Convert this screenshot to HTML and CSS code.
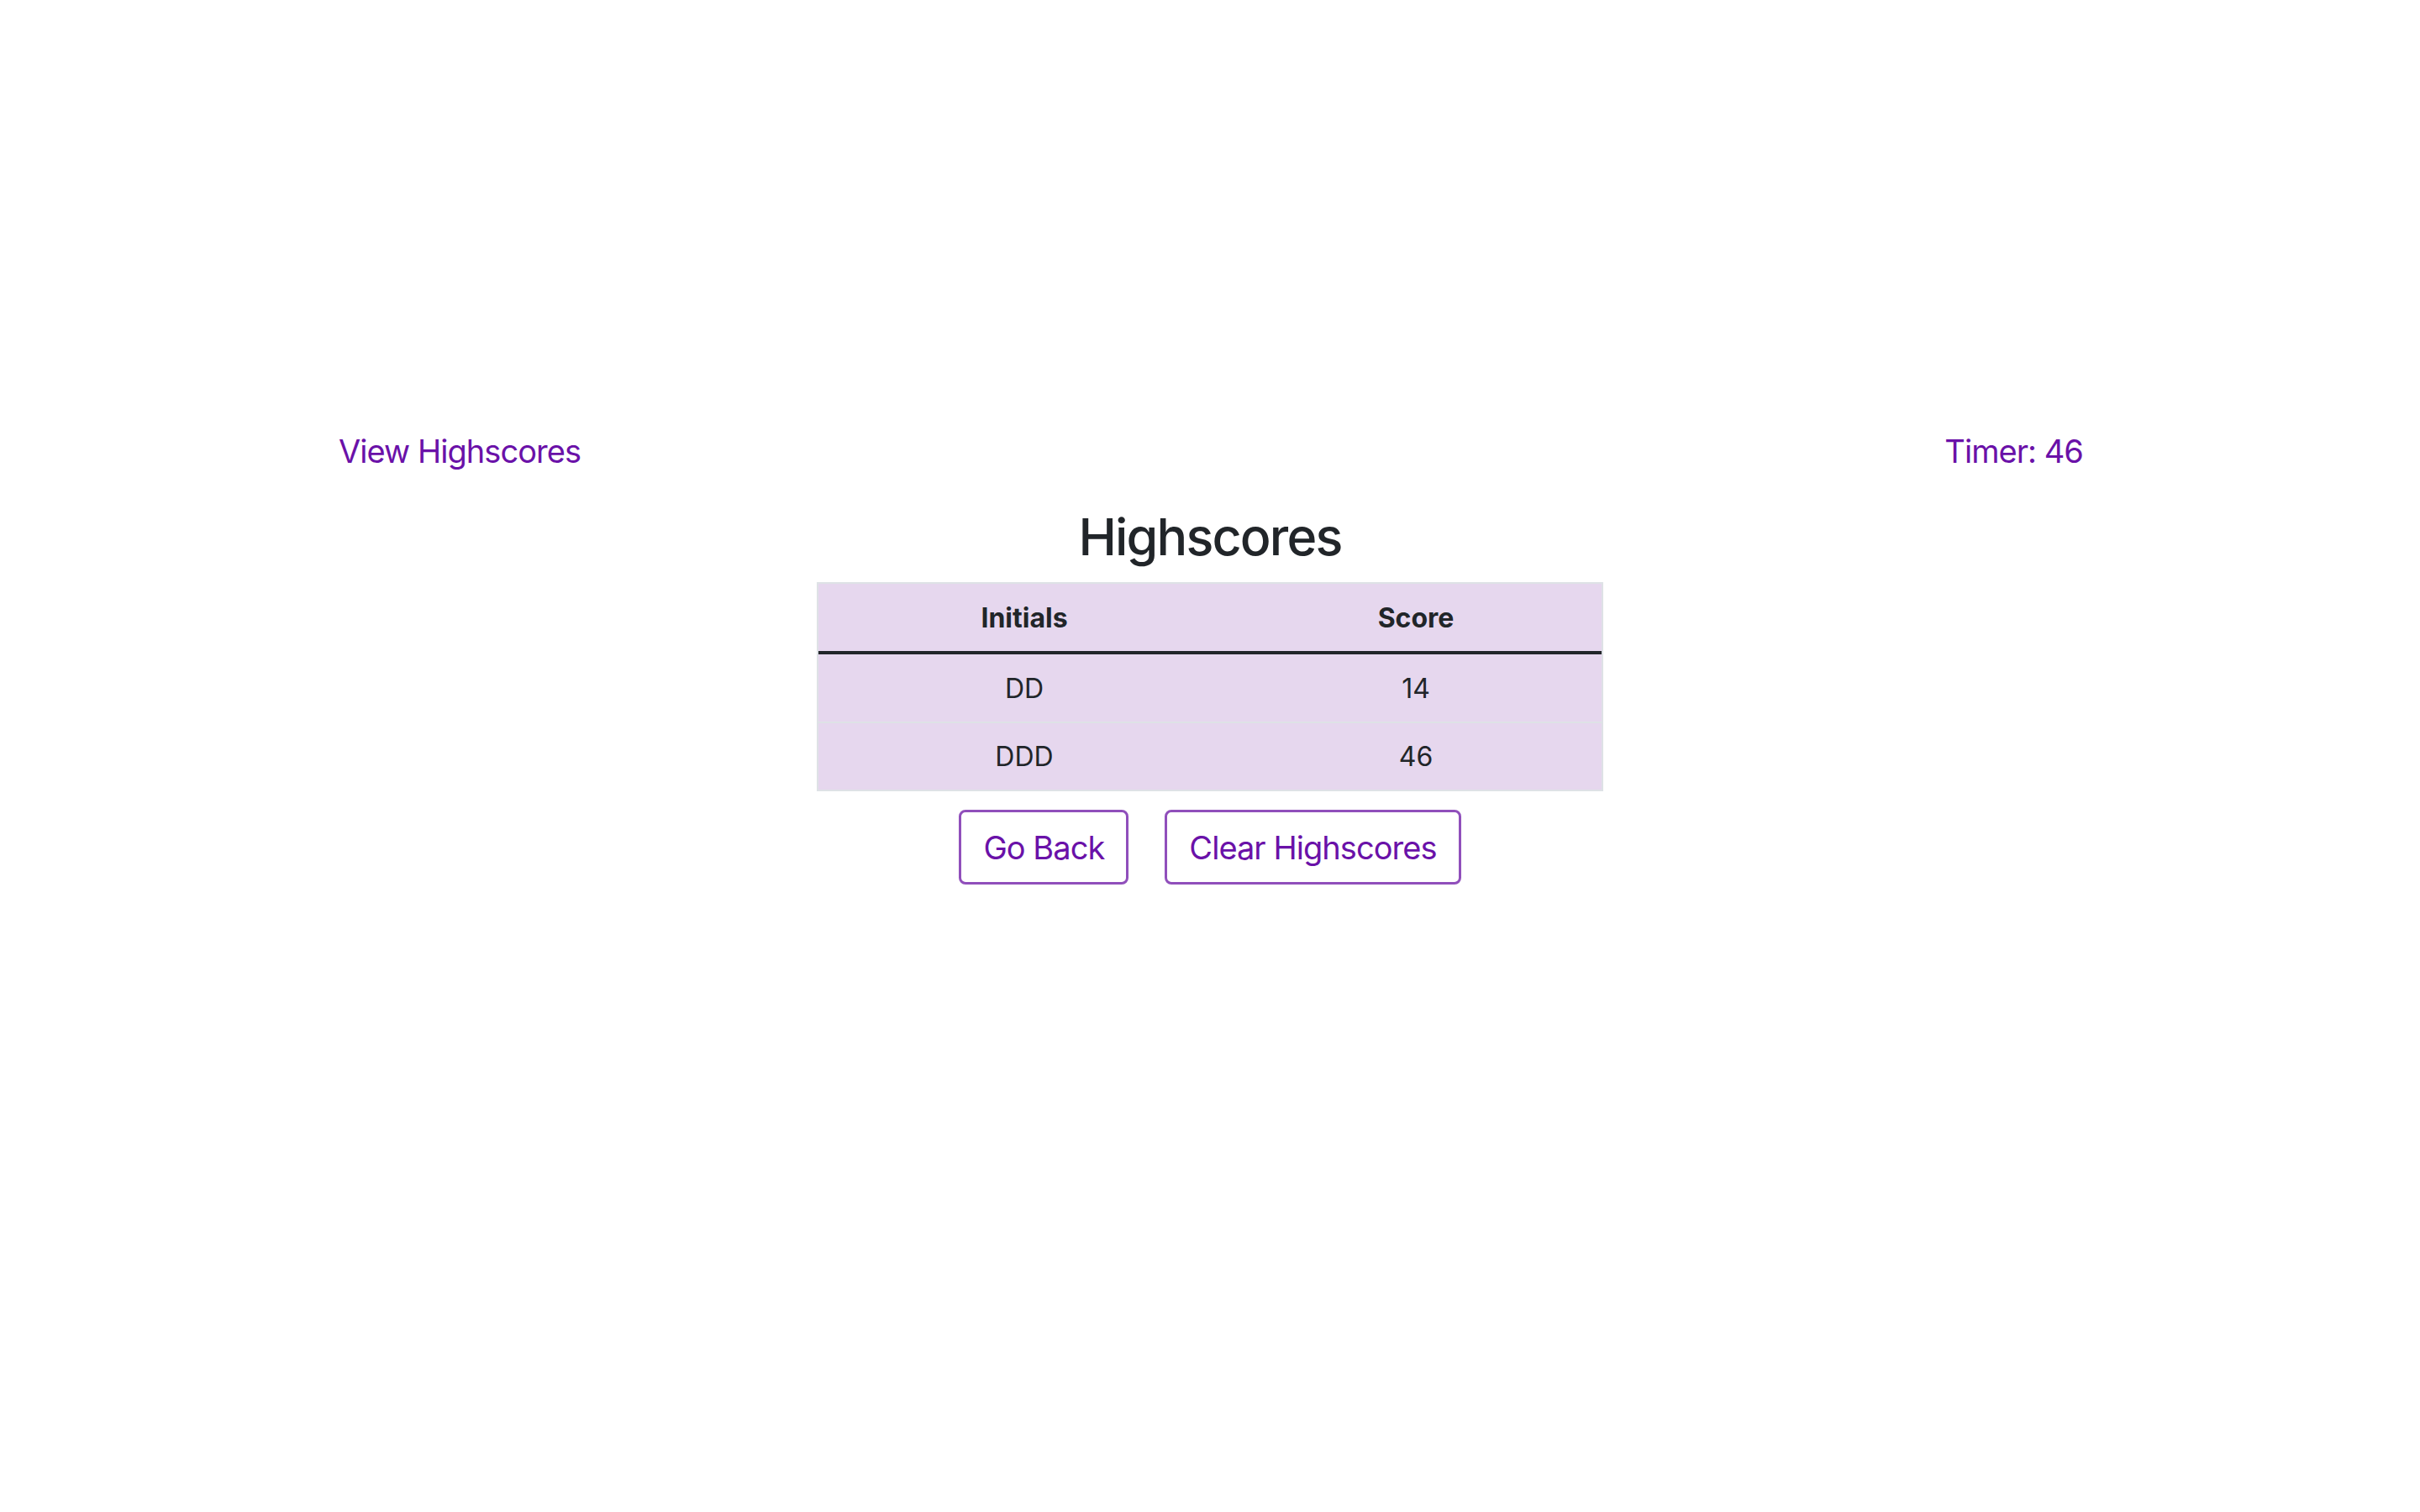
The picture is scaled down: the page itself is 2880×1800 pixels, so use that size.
FILE: index.html
```html
<!DOCTYPE html>
<html lang="en">
<head>
<meta charset="utf-8">
<title>Highscores</title>
<link rel="stylesheet" href="styles.css">
</head>
<body>
<div class="page">
  <header class="topbar">
    <a class="view-link" href="#">View Highscores</a>
    <span class="timer">Timer: 46</span>
  </header>
  <main class="scores">
    <h2 class="title">Highscores</h2>
    <table class="score-table">
      <thead>
        <tr><th class="col-initials">Initials</th><th class="col-score">Score</th></tr>
      </thead>
      <tbody>
        <tr class="row-first"><td>DD</td><td>14</td></tr>
        <tr class="row-next"><td>DDD</td><td>46</td></tr>
      </tbody>
    </table>
    <div class="actions">
      <button class="btn btn-back">Go Back</button>
      <button class="btn btn-clear">Clear Highscores</button>
    </div>
  </main>
</div>
</body>
</html>
```

FILE: styles.css
```css
html, body {
  margin: 0;
  padding: 0;
  background: #ffffff;
}

body {
  font-family: Inter, "Noto Sans", "Liberation Sans", sans-serif;
  color: #212529;
}

.page {
  padding-top: 513px;
}

.topbar {
  display: flex;
  justify-content: space-between;
  align-items: flex-start;
  padding: 0 401px 0 403px;
  font-size: 38px;
  line-height: 48px;
  letter-spacing: -0.025em;
  color: #6a11a8;
}

.view-link {
  color: #6a11a8;
  text-decoration: none;
}

.timer {
  color: #6a11a8;
}

.scores {
  display: flex;
  flex-direction: column;
  align-items: center;
  margin-top: 40px;
}

.title {
  margin: 0 0 15px 0;
  font-size: 61px;
  line-height: 77px;
  font-weight: 500;
  letter-spacing: -0.03em;
  color: #212529;
}

.score-table {
  border-collapse: separate;
  border-spacing: 0;
  border: 2px solid #dee2e6;
  background: #e6d7ee;
  font-size: 32px;
  color: #212529;
}

.score-table th,
.score-table td {
  padding: 0;
  text-align: center;
  vertical-align: middle;
}

.score-table th {
  height: 80px;
  font-weight: 700;
  border-bottom: 4px solid #212529;
}

.col-initials {
  width: 490px;
}

.col-score {
  width: 442px;
}

.row-first td {
  height: 80px;
}

.row-next td {
  height: 79px;
  border-top: 2px solid #dee2e6;
}

.actions {
  display: flex;
  gap: 43px;
  margin-top: 22px;
}

.btn {
  height: 89px;
  box-sizing: border-box;
  padding: 0 26px;
  background: #ffffff;
  border: 3px solid #904fbb;
  border-radius: 8px;
  color: #6a11a8;
  font-family: Inter, "Noto Sans", "Liberation Sans", sans-serif;
  font-size: 38px;
  line-height: 48px;
  letter-spacing: -0.025em;
  cursor: pointer;
}
```
